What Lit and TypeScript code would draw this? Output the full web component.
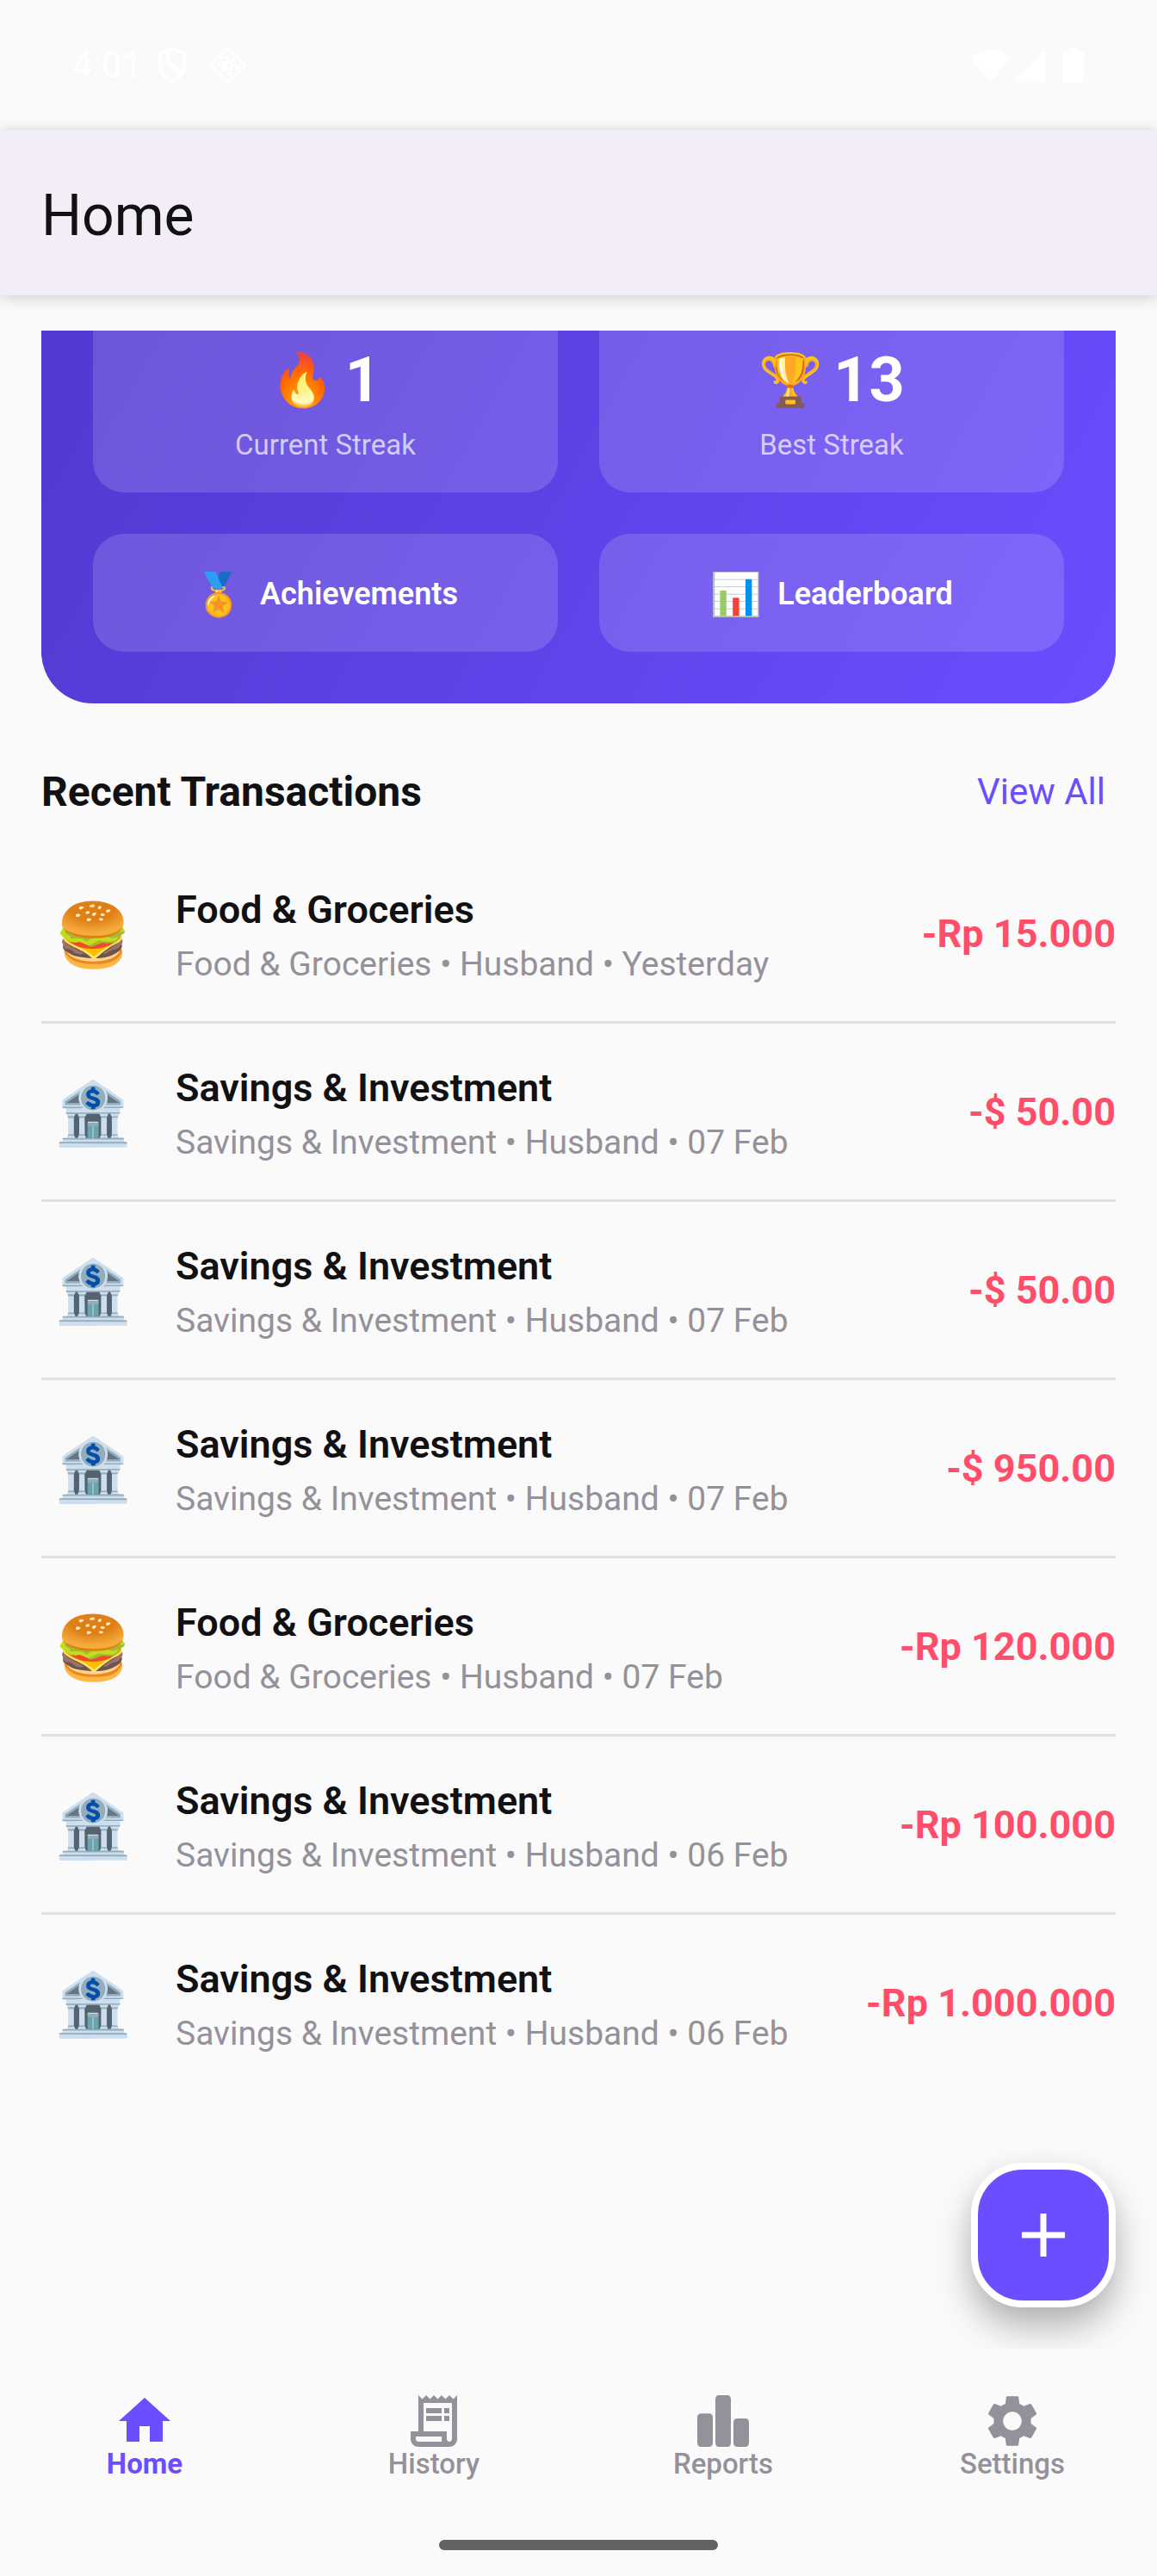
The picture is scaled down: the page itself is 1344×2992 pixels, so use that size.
import { LitElement, html, css, svg } from 'lit';
import { customElement, property } from 'lit/decorators.js';
import { classMap } from 'lit/directives/class-map.js';

interface Transaction {
    icon: string;
    category: string;
    date: string;
    amount: string;
}

const FOOD = { icon: '🍔', category: 'Food & Groceries' };
const SAVINGS = { icon: '🏦', category: 'Savings & Investment' };

const TRANSACTIONS: Transaction[] = [
    { ...FOOD, date: 'Yesterday', amount: '-Rp 15.000' },
    { ...SAVINGS, date: '07 Feb', amount: '-$ 50.00' },
    { ...SAVINGS, date: '07 Feb', amount: '-$ 50.00' },
    { ...SAVINGS, date: '07 Feb', amount: '-$ 950.00' },
    { ...FOOD, date: '07 Feb', amount: '-Rp 120.000' },
    { ...SAVINGS, date: '06 Feb', amount: '-Rp 100.000' },
    { ...SAVINGS, date: '06 Feb', amount: '-Rp 1.000.000' },
];

const TABS = [
    {
        id: 'home',
        label: 'Home',
        icon: svg`<path d="M10 20v-6h4v6h5v-8h3L12 3 2 12h3v8z"/>`,
    },
    {
        id: 'history',
        label: 'History',
        icon: svg`<path d="M19.5 3.5L18 2l-1.5 1.5L15 2l-1.5 1.5L12 2l-1.5 1.5L9 2 7.5 3.5 6 2v14H3v3c0 1.66 1.34 3 3 3h12c1.66 0 3-1.34 3-3V2l-1.5 1.5zM15 20H6c-.55 0-1-.45-1-1v-1h10v2zm4-1c0 .55-.45 1-1 1s-1-.45-1-1v-3H8V5h11v14z"/><path d="M9 7h6v2H9zM16 7h2v2h-2zM9 10h6v2H9zM16 10h2v2h-2z"/>`,
    },
    {
        id: 'reports',
        label: 'Reports',
        icon: svg`<rect x="2" y="9.1" width="6" height="12.9" rx="1.4"/><rect x="9" y="2" width="6" height="20" rx="1.4"/><rect x="16" y="11" width="6" height="11" rx="1.4"/>`,
    },
    {
        id: 'settings',
        label: 'Settings',
        icon: svg`<path d="M19.14 12.94c.04-.3.06-.61.06-.94 0-.32-.02-.64-.07-.94l2.03-1.58c.18-.14.23-.41.12-.61l-1.92-3.32c-.12-.22-.37-.29-.59-.22l-2.39.96c-.5-.38-1.03-.7-1.62-.94l-.36-2.54c-.04-.24-.24-.41-.48-.41h-3.84c-.24 0-.43.17-.47.41l-.36 2.54c-.59.24-1.13.57-1.62.94l-2.39-.96c-.22-.08-.47 0-.59.22L2.74 8.87c-.12.21-.08.47.12.61l2.03 1.58c-.05.3-.09.63-.09.94s.02.64.07.94l-2.03 1.58c-.18.14-.23.41-.12.61l1.92 3.32c.12.22.37.29.59.22l2.39-.96c.5.38 1.03.7 1.62.94l.36 2.54c.05.24.24.41.48.41h3.84c.24 0 .44-.17.47-.41l.36-2.54c.59-.24 1.13-.56 1.62-.94l2.39.96c.22.08.47 0 .59-.22l1.92-3.32c.12-.22.07-.47-.12-.61l-2.01-1.58zM12 15.6c-1.98 0-3.6-1.62-3.6-3.6s1.62-3.6 3.6-3.6 3.6 1.62 3.6 3.6-1.62 3.6-3.6 3.6z"/>`,
    },
];

@customElement('status-bar')
export class StatusBar extends LitElement {
    render() {
        return html`
            <span class="time">4:01</span>
            <svg class="shield" width="34" height="44" viewBox="0 0 34 44" fill="none" stroke="currentColor" stroke-width="4" stroke-linejoin="round" aria-hidden="true">
                <path d="M17 3 L31 8 V19 C31 30 25 38 17 41 C9 38 3 30 3 19 V8 Z"/>
                <path d="M11 6 C10 19 15 20 21 25 C26 29 27 32 25 35"/>
            </svg>
            <svg class="diamond" width="44" height="44" viewBox="0 0 44 44" aria-hidden="true">
                <path d="M22 2 L42 22 L22 42 L2 22 Z" fill="none" stroke="currentColor" stroke-width="3" stroke-linejoin="round"/>
                <path fill="currentColor" d="M15 14 L22 9 V14 Z M30 15 V21 L25 15 Z M36 23 L30 29 V23 Z M29 30 L22 35 V30 Z M15 29 V23 L20 29 Z M8 22 L14 16 V22 Z M18 17 H25 L28 20 V25 L25 28 H19 L16 25 V19 Z M20 20 V25 H25 V20 Z" fill-rule="evenodd"/>
            </svg>
            <span class="spacer"></span>
            <svg width="132" height="40" viewBox="0 0 132 40" fill="currentColor" aria-hidden="true">
                <path d="M0 13 C6 5 14 1 22.500 1 C31 1 39 5 45 13 L22.500 39 Z"/>
                <path d="M49 39 L86 1 V39 Z"/>
                <path d="M114 0 h9 v4 h6 q2 0 2 2 v32 q0 2 -2 2 h-20 q-2 0 -2 -2 v-32 q0 -2 2 -2 h5 z"/>
            </svg>
        `;
    }

    static styles = css`
        :host {
            display: flex;
            align-items: center;
            height: 151px;
            padding: 0 84px;
            box-sizing: border-box;
            color: #fff;
        }

        .time {
            font-size: 42px;
            line-height: 48px;
        }

        .shield {
            margin-left: 18px;
        }

        .diamond {
            margin-left: 26px;
        }

        .spacer {
            flex: 1;
        }
    `;
}

@customElement('streak-card')
export class StreakCard extends LitElement {
    render() {
        return html`
            <div class="tile">
                <div class="score"><span class="trophy">🔥</span><strong>1</strong></div>
                <span class="caption">Current Streak</span>
            </div>
            <div class="tile">
                <div class="score"><span class="trophy">🏆</span><strong>13</strong></div>
                <span class="caption">Best Streak</span>
            </div>
            <button class="action"><span class="emoji">🏅</span>Achievements</button>
            <button class="action"><span class="emoji">📊</span>Leaderboard</button>
        `;
    }

    static styles = css`
        :host {
            display: grid;
            grid-template-columns: 1fr 1fr;
            gap: 48px;
            padding: 0 60px 60px;
            border-radius: 0 0 60px 60px;
            background: linear-gradient(119deg, #5238d0, #6c4dff);
            color: #fff;
        }

        .tile {
            display: flex;
            flex-direction: column;
            align-items: center;
            gap: 12px;
            padding: 16px 36px 34px;
            border-radius: 0 0 36px 36px;
            background: rgba(255, 255, 255, 0.15);
        }

        .score {
            display: flex;
            align-items: center;
            gap: 12px;
            font-size: 72px;
            line-height: 84px;
        }

        .trophy {
            font-size: 60px;
        }

        .caption {
            font-size: 33px;
            line-height: 42px;
            color: rgba(255, 255, 255, 0.7);
        }

        .action {
            display: flex;
            align-items: center;
            justify-content: center;
            gap: 18px;
            padding: 38px 36px 34px;
            border: none;
            border-radius: 36px;
            background: rgba(255, 255, 255, 0.15);
            color: inherit;
            font: 600 36px/65px Roboto, sans-serif;
            cursor: pointer;
        }

        .emoji {
            font-size: 48px;
        }
    `;
}

@customElement('transaction-row')
export class TransactionRow extends LitElement {
    @property({ attribute: false }) item!: Transaction;

    render() {
        const { icon, category, date, amount } = this.item;
        return html`
            <span class="icon">${icon}</span>
            <div class="details">
                <div class="title">${category}</div>
                <div class="meta">${category} • Husband • ${date}</div>
            </div>
            <span class="amount">${amount}</span>
        `;
    }

    static styles = css`
        :host {
            display: flex;
            align-items: center;
            gap: 36px;
            padding: 41px 0 39px;
        }

        .icon {
            display: flex;
            justify-content: center;
            width: 120px;
            padding-top: 4px;
            font-size: 72px;
            line-height: 120px;
        }

        .details {
            flex: 1;
            display: flex;
            flex-direction: column;
            gap: 9px;
        }

        .title {
            font-size: 45px;
            font-weight: 600;
            line-height: 60px;
        }

        .meta {
            font-size: 39px;
            line-height: 48px;
            color: #94919b;
        }

        .amount {
            font-size: 45px;
            font-weight: 700;
            line-height: 60px;
            color: #ff4d6a;
        }
    `;
}

@customElement('bottom-nav')
export class BottomNav extends LitElement {
    @property() active = 'home';

    render() {
        return html`
            <nav>
                ${TABS.map((tab) => html`
                    <a class=${classMap({ tab: true, active: tab.id === this.active })} href="#${tab.id}">
                        <svg width="72" height="72" viewBox="0 0 24 24" fill="currentColor" aria-hidden="true">${tab.icon}</svg>
                        <span>${tab.label}</span>
                    </a>
                `)}
            </nav>
            <div class="handle"></div>
        `;
    }

    static styles = css`
        :host {
            display: block;
            padding: 48px 0 30px;
        }

        nav {
            display: grid;
            grid-template-columns: repeat(4, 1fr);
        }

        .tab {
            display: flex;
            flex-direction: column;
            align-items: center;
            color: #94919b;
            font-size: 33px;
            font-weight: 500;
            line-height: 27px;
            text-decoration: none;
        }

        .active {
            color: #6c4dff;
            font-weight: 700;
        }

        .handle {
            width: 324px;
            height: 12px;
            margin: 75px auto 0;
            border-radius: 6px;
            background: #636363;
        }
    `;
}

@customElement('app-root')
export class AppRoot extends LitElement {
    render() {
        return html`
            <status-bar></status-bar>
            <header><h1>Home</h1></header>
            <main>
                <streak-card></streak-card>
                <div class="section">
                    <h2>Recent Transactions</h2>
                    <a href="#history">View All</a>
                </div>
                <ul>
                    ${TRANSACTIONS.map((item) => html`<li><transaction-row .item=${item}></transaction-row></li>`)}
                </ul>
                <button class="fab" aria-label="Add transaction">
                    <svg width="50" height="50" viewBox="0 0 50 50" aria-hidden="true">
                        <path d="M25 0 V50 M0 25 H50" stroke="currentColor" stroke-width="7"/>
                    </svg>
                </button>
            </main>
            <bottom-nav active="home"></bottom-nav>
        `;
    }

    static styles = css`
        :host {
            display: flex;
            flex-direction: column;
            min-height: 100vh;
            background: #fafafa;
            color: #111114;
            font-family: Roboto, sans-serif;
        }

        h1, h2, ul {
            margin: 0;
            padding: 0;
        }

        header {
            position: relative;
            z-index: 1;
            padding: 58px 48px 50px;
            background: #f3edf7;
            box-shadow: 0 0 14px rgba(0, 0, 0, 0.12), 0 6px 18px rgba(0, 0, 0, 0.08);
        }

        h1 {
            font-size: 66px;
            font-weight: 400;
            line-height: 84px;
        }

        main {
            position: relative;
            flex: 1;
            padding: 41px 48px 48px;
            overflow: hidden;
        }

        .section {
            display: flex;
            align-items: center;
            justify-content: space-between;
            margin: 73px 0 32px;
            padding-right: 12px;
            line-height: 60px;
        }

        h2 {
            font-size: 48px;
            font-weight: 700;
        }

        .section a {
            color: #6c4dff;
            font-size: 42px;
            text-decoration: none;
        }

        ul {
            list-style: none;
        }

        li + li {
            border-top: 3px solid #e0e0e0;
        }

        .fab {
            position: absolute;
            right: 48px;
            bottom: 48px;
            display: flex;
            align-items: center;
            justify-content: center;
            width: 168px;
            height: 168px;
            padding: 0;
            border: 8px solid #fff;
            border-radius: 60px;
            background: #6c4dff;
            color: #fff;
            box-shadow: 0 24px 42px rgba(0, 0, 0, 0.26), 0 6px 30px rgba(0, 0, 0, 0.06);
            cursor: pointer;
        }
    `;
}
